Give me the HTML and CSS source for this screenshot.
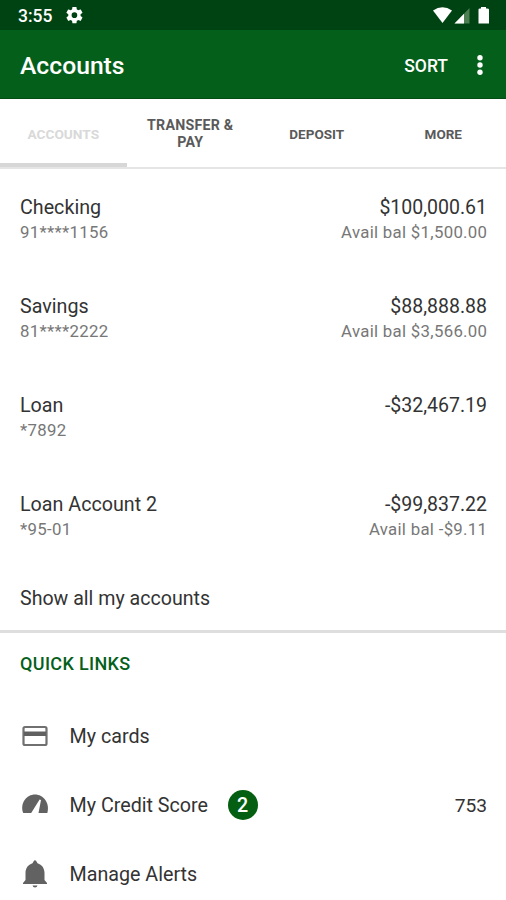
FILE: index.html
```html
<!DOCTYPE html>
<html lang="en">
<head>
<meta charset="utf-8">
<title>Accounts</title>
<link rel="stylesheet" href="styles.css">
</head>
<body>
<div class="status">
  <span class="time">3:55</span>
  <svg class="gear" width="18" height="18" viewBox="1 2.500 21 21"><path fill="#fff" fill-rule="evenodd" d="M19.140 12.940c.04-.3.06-.61.06-.94s-.02-.64-.07-.94l2.030-1.580a.49.49 0 0 0 .12-.61l-1.920-3.320a.49.49 0 0 0-.59-.22l-2.390.96a7 7 0 0 0-1.620-.94l-.36-2.540a.48.48 0 0 0-.48-.41h-3.840a.47.47 0 0 0-.47.41l-.36 2.540c-.59.24-1.130.57-1.620.94l-2.390-.96a.48.48 0 0 0-.59.22L2.740 8.870a.48.48 0 0 0 .12.61l2.030 1.580a6.500 6.500 0 0 0 0 1.880l-2.030 1.580a.49.49 0 0 0-.12.61l1.920 3.320c.12.22.37.29.59.22l2.390-.96c.5.38 1.030.7 1.620.94l.36 2.540c.05.24.24.41.48.41h3.840c.24 0 .44-.17.47-.41l.36-2.540c.59-.24 1.130-.56 1.620-.94l2.390.96c.22.08.47 0 .59-.22l1.920-3.320a.47.47 0 0 0-.12-.61zM12 15.300a3.300 3.300 0 1 1 0-6.600 3.300 3.300 0 0 1 0 6.600z"/></svg>
  <svg class="signals" width="58" height="18" viewBox="0 0 58 18"><path fill="#fff" d="M0 3.500Q9.500-3 19 3.500L9.500 16z"/><path fill="#4d7f53" d="M21.500 16.500L36.500 1V16.500z"/><path fill="#fff" d="M21.500 16.500L31 6.700V16.500z"/><path fill="#fff" d="M45.500 2.500Q45.500 1.500 47 1.500H48V0h5v1.500H54Q56 1.500 56 2.500V16.500H45.500z"/></svg>
</div>
<header class="bar">
  <h1>Accounts</h1><span class="sort">SORT</span>
  <svg width="6" height="20" viewBox="0 0 6 20" fill="#fff"><circle cx="3" cy="2.700" r="2.700"/><circle cx="3" cy="10" r="2.700"/><circle cx="3" cy="17.300" r="2.700"/></svg>
</header>
<nav class="tabs"><span class="tab active">ACCOUNTS</span><span class="tab wide">TRANSFER &amp;<br>PAY</span><span class="tab">DEPOSIT</span><span class="tab">MORE</span></nav>
<main>
  <section class="accounts">
    <div class="account"><div><p class="name">Checking</p><p class="sub">91****1156</p></div><div class="amount"><p class="name">$100,000.61</p><p class="sub">Avail bal $1,500.00</p></div></div>
    <div class="account"><div><p class="name">Savings</p><p class="sub">81****2222</p></div><div class="amount"><p class="name">$88,888.88</p><p class="sub">Avail bal $3,566.00</p></div></div>
    <div class="account"><div><p class="name">Loan</p><p class="sub">*7892</p></div><div class="amount"><p class="name">-$32,467.19</p></div></div>
    <div class="account"><div><p class="name">Loan Account 2</p><p class="sub">*95-01</p></div><div class="amount"><p class="name">-$99,837.22</p><p class="sub">Avail bal -$9.11</p></div></div>
    <p class="showall">Show all my accounts</p>
  </section>
  <section class="links">
    <h2>QUICK LINKS</h2>
    <div class="link"><svg width="30" height="30" viewBox="0 0 30 30"><rect x="3.500" y="6" width="23" height="18" rx="1.500" fill="none" stroke="#707070" stroke-width="2.200"/><path fill="#606060" d="M4 10.500h22v4.500H4z"/></svg><span>My cards</span></div>
    <div class="link"><svg width="30" height="30" viewBox="0 0 30 30"><path fill="#626262" d="M3 22.500C0 13 6.500 4.500 15 4.500S30 13 27.500 22.500Q27.300 23 26.500 23H18.500L21 10L19.600 9.400L11.200 23H4Q3.200 23 3 22.500z"/></svg><span>My Credit Score</span><b class="badge">2</b><span class="score">753</span></div>
    <div class="link"><svg width="30" height="30" viewBox="0 0 30 30"><path fill="#626262" d="M15 1Q16.500 1.800 17.500 4.200C22 5.800 24.500 9 24.500 14V21L27 24V25H3V24L5.500 21V14C5.500 9 8 5.800 12.500 4.200Q13.500 1.800 15 1zM12.500 26.500H17.500Q17 28.500 15 28.500T12.500 26.500z"/></svg><span>Manage Alerts</span></div>
  </section>
</main>
</body>
</html>
```
FILE: styles.css
```css
* { box-sizing: border-box; }
body { margin: 0; width: 506px; height: 900px; overflow: hidden; background: #fff; color: #333; font-family: Roboto, sans-serif; }
p, h1, h2 { margin: 0; }
svg { display: block; flex: none; }
.status { height: 30px; background: #004312; display: flex; align-items: center; padding: 2px 15px 0 18px; color: #fff; }
.time { font-size: 17.5px; font-weight: 500; width: 47px; }
.signals { margin-left: auto; }
.gear { margin-top: -1px; }
.bar { height: 69px; background: #045f1b; border-bottom: 1px solid #034c16; color: #fff; display: flex; align-items: center; padding: 3px 23px 0 20px; }
.bar svg { margin-top: -2px; }
h1 { font-size: 24.7px; font-weight: 500; }
.sort { margin-left: auto; margin-right: 29px; font-size: 17.5px; font-weight: 500; }
.tabs { height: 70px; display: grid; grid-template-columns: repeat(4, 1fr); border-bottom: 2px solid #e5e5e5; }
.tab { display: flex; align-items: center; justify-content: center; text-align: center; font-size: 13.7px; line-height: 17px; padding-top: 2px; font-weight: 700; color: #5a5a5a; }
.tab:nth-child(n+3) { padding-left: 1px; font-size: 13.5px; }
.tab.wide { font-size: 14.2px; letter-spacing: .25px; padding-left: 1px; }
.tab.active { color: #d9d9d9; box-shadow: inset 0 -4px #d7d7d7; }
.accounts { height: 464px; padding: 26px 19px 0 20px; border-bottom: 3px solid #dedede; }
.account { height: 99px; display: flex; justify-content: space-between; }
.amount { text-align: right; }
.name { font-size: 19.7px; line-height: 26px; }
.amount .name { font-size: 19.5px; }
.sub { font-size: 16.8px; line-height: 24px; margin-top: -1px; color: #777; letter-spacing: .3px; }
.amount .sub { margin-right: -.3px; }
.showall { font-size: 19.6px; line-height: 26px; margin-top: -5px; }
.links { padding: 18px 19px 0 20px; }
h2 { font-size: 18px; line-height: 26px; font-weight: 500; letter-spacing: .35px; color: #045f1b; margin-bottom: 25px; }
.link { height: 69px; display: flex; align-items: center; font-size: 19.7px; }
.link svg { margin-right: 19.5px; margin-top: -1px; }
.badge { width: 30px; height: 30px; margin-left: 19.5px; margin-top: -1px; border-radius: 50%; background: #045f12; color: #fff; display: flex; align-items: center; justify-content: center; font-weight: 500; }
.score { margin-left: auto; font-size: 19.2px; }
```
